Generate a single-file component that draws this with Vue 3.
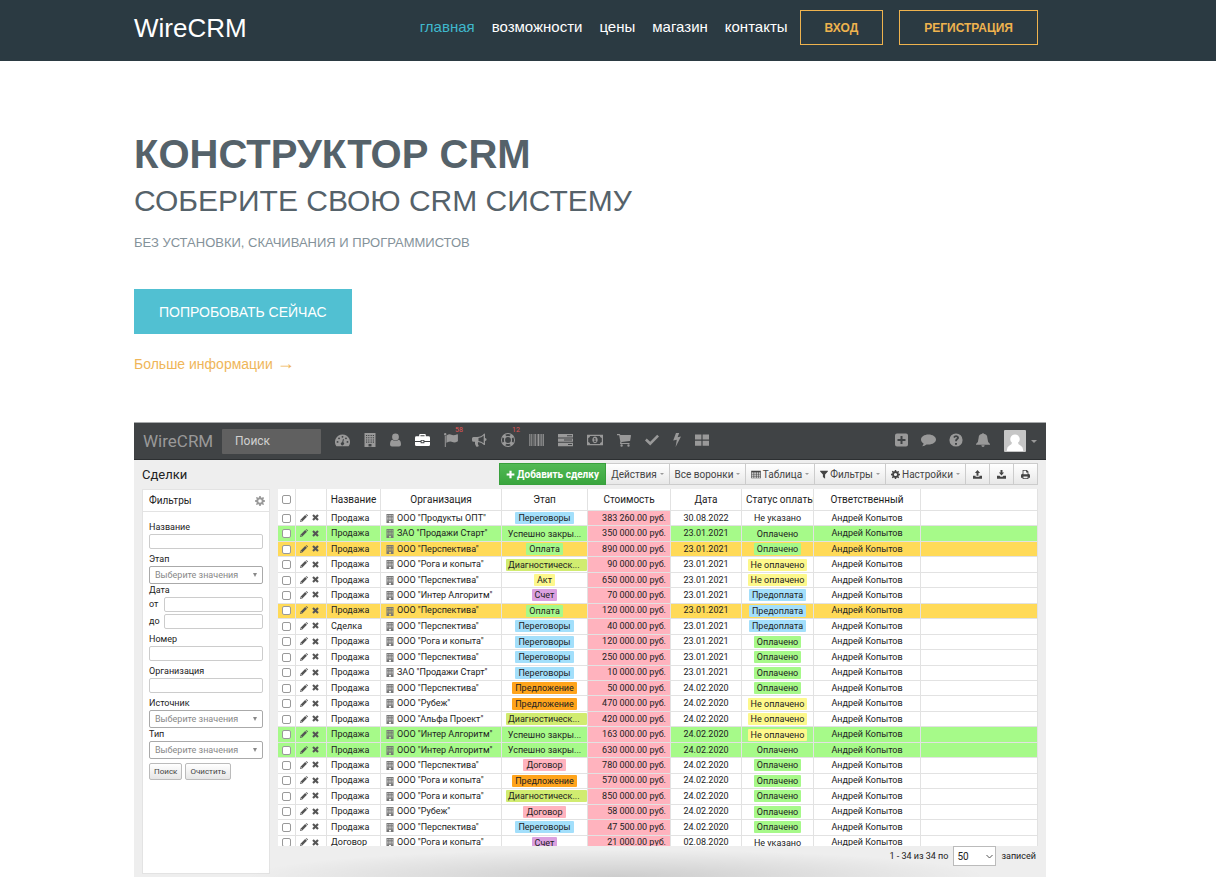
<script setup>
const dot = (x, y, r) => `M${x - r} ${y}a${r} ${r} 0 1 0 ${2 * r} 0a${r} ${r} 0 1 0 ${-2 * r} 0z`
const box = (x, y, w, h) => `M${x} ${y}h${w}v${h}h${-w}z`
const windows = [2, 4.2, 6.6, 8.8].flatMap(x => [2, 4.2, 6.4, 8.6].map(y => box(x, y, 1.2, 1.1))).join('')

// name: [box width, box height, path, drawn width when it differs]
const icons = {
  gauge: [16, 14, 'M8 1a8 8 0 0 0-6.7 12.3q.2.4.6.4h12.2q.4 0 .6-.4A8 8 0 0 0 8 1z' + dot(2.7, 9, 1) + dot(4.3, 5.2, 1) + dot(8, 3.6, 1) + dot(11.7, 5.2, 1) + dot(13.3, 9, 1) + 'M8.5 6l1 .3-.7 3.2a1.7 1.7 0 1 1-1.2-.2z', 15],
  building: [12, 14, 'M.5 0h11v14H.5z' + windows + box(4.5, 11, 3, 2.4)],
  user: [11, 14, dot(5.5, 4, 3.4) + 'M2.4 6.7Q5.5 9.4 8.6 6.7 11 7.500 11 11.500q0 2-2 2H2q-2 0-2-2Q0 7.500 2.400 6.700z'],
  briefcase: [16, 14, 'M4.500 3V1.500Q4.500.5 5.500.5h5q1 0 1 1V3h3Q16 3 16 4.500V8h-6V7H6v1H0V4.500Q0 3 1.500 3zM5.800 3h4.400V1.800H5.800zM0 9h6v1.400h4V9h6v3q0 1.500-1.500 1.500h-13Q0 13.500 0 12zM7 7.800h2v1.500H7z', 15],
  flag: [14, 14, dot(1.2, 1.3, 1.2) + 'M.8 3h1v11H.8zM2.400 2.600q3-2 5-.8t6-.6q.5 0 .5.500v6.500q-3.500 2-5.500.800t-6 .800z'],
  bullhorn: [15, 14, 'M13 5V1.200Q13 .3 12 .7 9 4 5 4H1.500Q0 4 0 5.500v1.800Q0 8.800 1.500 8.800H3q-.6 2.500 1.200 4.600 1.500.6 2.600-.4-1.700-1.600-.6-4Q9.800 9.400 12 12q1 .4 1-.6V8q1.600-.2 1.600-1.500T13 5zM11.700 2.500v7.800Q9.500 8.200 6.500 7.900V5Q9.500 4.600 11.700 2.500z'],
  ring: [14, 14, dot(7, 7, 7) + dot(7, 7, 2.9) + 'M4.200 1.700A6 6 0 0 1 9.800 1.700L8.500 3.200A4.200 4.200 0 0 0 5.500 3.200zM4.200 12.300A6 6 0 0 0 9.800 12.300L8.500 10.800A4.200 4.200 0 0 1 5.500 10.800zM1.700 4.200A6 6 0 0 0 1.700 9.800L3.200 8.500A4.200 4.200 0 0 1 3.200 5.500zM12.300 4.200A6 6 0 0 1 12.300 9.800L10.800 8.500A4.200 4.200 0 0 0 10.800 5.500z'],
  barcode: [15, 14, [[0, .7], [1.200, .4], [2.300, .9], [3.900, .5], [5.200, .5], [6.200, 1], [8, .5], [9, 1.200], [10.800, .5], [11.800, .9], [13.200, .4], [14.100, .8]].map(([x, w]) => box(x, 1, w, 12)).join('')],
  server: [15, 14, box(0, 1, 15, 3.4) + box(9, 2.2, 5, 1) + box(0, 5.400, 15, 3.400) + box(6, 6.600, 8, 1) + box(0, 9.800, 15, 3.400) + box(10, 11, 4, 1)],
  money: [16, 14, box(0, 1.8, 16, 10.4) + 'M3.200 3h9.600q.2 1.600 2 2v4q-1.800.3-2 2H3.200Q3 9.300 1.200 9V5Q3 4.600 3.200 3z' + 'M8 3.500a2.700 3.400 0 1 0 .01 0z' + 'M7.500 5h1v3.200h.7v.9H6.800v-.9h.7V6.300h-.7v-.8z'],
  cart: [14, 14, 'M0 1h2.500q.7 0 .8 1H13.500q.5 0 .5.600l-.8 5q-.1.500-.6.500L4.500 9l-.1.900h8.100V11H3.500q-.7 0-.5-.9L3.400 9 2.200 2.200H0z' + dot(4.600, 12.500, 1.200) + dot(11.500, 12.500, 1.200)],
  check: [14, 14, 'M1.700 5.500L0 7.400l5.200 5L14 3.600 12.200 1.700 5.200 8.700z'],
  bolt: [8, 14, 'M3 0h3.200L4.600 4.300 8 3.500 2.600 14 3.800 6.700.2 7.600z'],
  grid: [14, 14, box(0, 1.500, 6.400, 5) + box(7.600, 1.500, 6.400, 5) + box(0, 7.700, 6.400, 5) + box(7.600, 7.700, 6.400, 5)],
  plusbox: [13, 14, 'M2 .6h9q2 0 2 2v9q0 2-2 2H2q-2 0-2-2v-9q0-2 2-2zM5.500 3.100v3H2.500v2h3v3h2v-3h3v-2h-3v-3z'],
  comment: [15, 14, 'M7.500 1.500C3.300 1.500 0 3.700 0 6.600c0 1.600 1 3 2.600 4q-.2 1.400-1.500 2.700 2.600-.2 4.400-1.800l2 .1c4.200 0 7.500-2.200 7.500-5s-3.300-5.100-7.500-5.100z'],
  question: [14, 14, dot(7, 7, 6.6) + 'M6 10h2v1.800H6zM4.200 4.100Q5.300 2.200 7.200 2.300q2.700.2 2.800 2.500 0 1.200-1.300 2-.8.500-.8 1.500H6.100q0-2 1.200-2.700.7-.5.7-.9 0-.7-.9-.7-.7 0-1.500 1.100z'],
  bell: [14, 14, 'M6.300.8q0-.8.700-.8t.7.800q3.600.6 3.700 4.200 0 4 2.600 6v.7H0V11q2.600-2 2.600-6Q2.700 1.400 6.300.8zM5.300 12.300h3.400q-.2 1.700-1.700 1.700t-1.700-1.700z'],
  gear: [14, 14, 'M6 0h2l.4 2 1.300.5L11.400 1.400 12.700 2.700 11.500 4.400 12 5.700 14 6v2l-2 .4-.5 1.300 1.200 1.700-1.300 1.300-1.700-1.200L8.400 12 8 14H6l-.4-2-1.300-.5-1.700 1.200-1.300-1.300L2.500 9.700 2 8.400 0 8V6l2-.4.500-1.300L1.300 2.600 2.600 1.300 4.300 2.500 5.600 2z' + dot(7, 7, 2.500)],
  plus: [14, 14, 'M5.300 1h3.400v4.300H13v3.400H8.700V13H5.300V8.700H1V5.300h4.300z'],
  table: [15, 14, box(0, 1, 15, 12) + [1, 4.700, 8.400, 12].flatMap(x => [4, 7, 10].map(y => box(x, y, x > 10 ? 2 : 2.700, 2))).join('')],
  filter: [12, 14, 'M0 1h12v1.500L7.700 7v6.500L4.300 11V7L0 2.500z'],
  upload: [14, 14, 'M7 0l4 4.500H8.500V9h-3V4.500H3zM0 9h4v1.500h6V9h4v4.500H0z'],
  download: [14, 14, 'M5.500 0h3v4H11L7 8.500 3 4h2.500zM0 9h4l1.500 1.500h3L10 9h4v4.500H0z'],
  print: [14, 14, 'M2.500 6V0H9l2.500 2.500V6q2.500 0 2.500 2.500V12h-2.500v2h-9v-2H0V8.500Q0 6 2.500 6zM3.800 6.500h6.400V4H8V1.300H3.800zM3.800 10v2.700h6.400V10z'],
  pencil: [14, 14, 'M0 14l.8-4L9 1.800 12.200 5 4 13.200zM9.900.9q1-1.200 2.200-.2l1.200 1.200q1 1.200-.2 2.200zM1.700 10.600l-.5 2.200 2.200-.5z'],
  cross: [14, 14, 'M3.500.5L7 4 10.500.5l3 3L10 7l3.500 3.500-3 3L7 10l-3.500 3.500-3-3L4 7 .5 3.500z'],
}

const appMenu = [
  ['gauge', 'Панель'], ['building', 'Организации'], ['user', 'Контакты'], ['briefcase', 'Сделки'],
  ['flag', 'Задачи', '58'], ['bullhorn', 'Рассылки'], ['ring', 'Поддержка', '12'], ['barcode', 'Товары'],
  ['server', 'Склад'], ['money', 'Платежи'], ['cart', 'Заказы'], ['check', 'Дела'], ['bolt', 'События'], ['grid', 'Модули'],
]
const tools = [['plusbox', 'Создать'], ['comment', 'Сообщения'], ['question', 'Помощь'], ['bell', 'Уведомления']]

const P = 'ООО "Перспектива"', R = 'ООО "Рога и копыта"', I = 'ООО "Интер Алгоритм"', Z = 'ЗАО "Продажи Старт"', B = 'ООО "Рубеж"'
const tones = {
  'Переговоры': 'blue', 'Оплата': 'green', 'Диагностическ...': 'lime', 'Акт': 'yellow', 'Счет': 'purple',
  'Предложение': 'orange', 'Договор': 'pink', 'Успешно закры...': 'none',
  'Не указано': 'none', 'Оплачено': 'green', 'Не оплачено': 'yellow', 'Предоплата': 'blue',
}
const T = 'Переговоры', O = 'Предложение', D = 'Диагностическ...', U = 'Успешно закры...'
const d1 = '23.01.2021', d2 = '24.02.2020', paid = 'Оплачено', unpaid = 'Не оплачено', pre = 'Предоплата'
const rows = [
  ['Продажа', 'ООО "Продукты ОПТ"', T, '383 260.00', '30.08.2022', 'Не указано'],
  ['Продажа', Z, U, '350 000.00', d1, paid, 'won'],
  ['Продажа', P, 'Оплата', '890 000.00', d1, paid, 'hot'],
  ['Продажа', R, D, '90 000.00', d1, unpaid],
  ['Продажа', P, 'Акт', '650 000.00', d1, unpaid],
  ['Продажа', I, 'Счет', '70 000.00', d1, pre],
  ['Продажа', P, 'Оплата', '120 000.00', d1, pre, 'hot'],
  ['Сделка', P, T, '40 000.00', d1, pre],
  ['Продажа', R, T, '120 000.00', d1, paid],
  ['Продажа', P, T, '250 000.00', d1, paid],
  ['Продажа', Z, T, '10 000.00', d1, paid],
  ['Продажа', P, O, '50 000.00', d2, paid],
  ['Продажа', B, O, '470 000.00', d2, unpaid],
  ['Продажа', 'ООО "Альфа Проект"', D, '420 000.00', d2, unpaid],
  ['Продажа', I, U, '163 000.00', d2, unpaid, 'won'],
  ['Продажа', I, U, '630 000.00', d2, paid, 'won'],
  ['Продажа', P, 'Договор', '780 000.00', d2, paid],
  ['Продажа', R, O, '570 000.00', d2, paid],
  ['Продажа', R, D, '850 000.00', d2, paid],
  ['Продажа', B, 'Договор', '58 000.00', d2, paid],
  ['Продажа', P, T, '47 500.00', d2, paid],
  ['Договор', R, 'Счет', '21 000.00', '02.08.2020', 'Не указано'],
]
</script>

<template>
  <header class="top">
    <div class="wrap top-row">
      <a class="brand" href="#">WireCRM</a>
      <nav class="nav">
        <a class="current" href="#">главная</a>
        <a href="#">возможности</a>
        <a href="#">цены</a>
        <a href="#">магазин</a>
        <a href="#">контакты</a>
      </nav>
      <div class="auth">
        <button>ВХОД</button>
        <button>РЕГИСТРАЦИЯ</button>
      </div>
    </div>
  </header>

  <main class="wrap">
    <section class="hero">
      <h1>КОНСТРУКТОР CRM</h1>
      <h2>СОБЕРИТЕ СВОЮ CRM СИСТЕМУ</h2>
      <p>БЕЗ УСТАНОВКИ, СКАЧИВАНИЯ И ПРОГРАММИСТОВ</p>
      <button class="try">ПОПРОБОВАТЬ СЕЙЧАС</button>
      <a class="more" href="#">Больше информации <span class="arrow">→</span></a>
    </section>

    <section class="app">
      <div class="bar">
        <span class="app-brand">WireCRM</span>
        <input class="search" type="text" placeholder="Поиск" aria-label="Поиск">
        <div class="menu">
          <a v-for="[name, label, count] in appMenu" :key="name" href="#" :aria-label="label" :class="{ on: name === 'briefcase' }">
            <svg :width="icons[name][3] ?? icons[name][0]" :height="icons[name][1]" :viewBox="`0 0 ${icons[name][0]} ${icons[name][1]}`"><path :d="icons[name][2]" /></svg>
            <span v-if="count" class="count">{{ count }}</span>
          </a>
        </div>
        <div class="tools">
          <a v-for="[name, label] in tools" :key="name" href="#" :aria-label="label">
            <svg :width="icons[name][0]" :height="icons[name][1]" :viewBox="`0 0 ${icons[name][0]} ${icons[name][1]}`"><path :d="icons[name][2]" /></svg>
          </a>
        </div>
        <button class="avatar" aria-label="Профиль">
          <svg width="22" height="22" viewBox="0 0 22 22"><rect width="22" height="22" rx="1" fill="#c6c6c6" /><path fill="#fff" d="M11 4.500a4.700 4.700 0 0 1 3 8.300q0 1.600 2.500 2.600 2.500 1.200 2.700 4.800v.8H2.800v-.8Q3 16.600 5.500 15.400 8 14.400 8 12.800a4.700 4.700 0 0 1 3-8.300z" /></svg>
          <i class="caret"></i>
        </button>
      </div>

      <div class="title-row">
        <h3>Сделки</h3>
        <div class="actions">
          <button class="add"><svg width="9" height="9" viewBox="0 0 14 14"><path :d="icons.plus[2]" /></svg>Добавить сделку</button>
          <button class="w63">Действия<i class="caret"></i></button>
          <button class="w76">Все воронки<i class="caret"></i></button>
          <button class="w69"><svg width="10" height="9" viewBox="0 0 15 14"><path :d="icons.table[2]" /></svg>Таблица<i class="caret"></i></button>
          <button class="w71"><svg width="8" height="9" viewBox="0 0 12 14"><path :d="icons.filter[2]" /></svg>Фильтры<i class="caret"></i></button>
          <button class="w80"><svg width="9" height="9" viewBox="0 0 14 14"><path :d="icons.gear[2]" /></svg>Настройки<i class="caret"></i></button>
          <button v-for="[n, l] in [['upload', 'Экспорт'], ['download', 'Импорт'], ['print', 'Печать']]" :key="n" class="w24" :aria-label="l">
            <svg width="9" height="9" viewBox="0 0 14 14"><path :d="icons[n][2]" /></svg>
          </button>
        </div>
      </div>

      <div class="work">
        <form class="filters" @submit.prevent>
          <div class="filters-head">Фильтры<svg width="10" height="10" viewBox="0 0 14 14"><path :d="icons.gear[2]" /></svg></div>
          <div class="fields">
            <div class="field"><label for="f-name">Название</label><input id="f-name" type="text"></div>
            <div class="field tight"><label for="f-stage">Этап</label><span class="pick"><select id="f-stage"><option>Выберите значения</option></select></span></div>
            <div class="field">
              <span class="cap">Дата</span>
              <div class="dates">
                <label for="f-from">от</label><input id="f-from" type="text">
                <label for="f-to">до</label><input id="f-to" type="text">
              </div>
            </div>
            <div class="field"><label for="f-num">Номер</label><input id="f-num" type="text"></div>
            <div class="field"><label for="f-org">Организация</label><input id="f-org" type="text"></div>
            <div class="field tight"><label for="f-src">Источник</label><span class="pick"><select id="f-src"><option>Выберите значения</option></select></span></div>
            <div class="field"><label for="f-type">Тип</label><span class="pick"><select id="f-type"><option>Выберите значения</option></select></span></div>
            <div class="buttons"><button>Поиск</button><button>Очистить</button></div>
          </div>
        </form>

        <div class="data">
          <div class="clip">
            <table>
              <colgroup><col class="c18"><col class="c31"><col class="c54"><col class="c121"><col class="c86"><col class="c83"><col class="c71"><col class="c72"><col class="c107"><col></colgroup>
              <thead>
                <tr>
                  <th><input type="checkbox" aria-label="Выбрать все"></th><th></th><th>Название</th><th>Организация</th><th>Этап</th><th>Стоимость</th><th>Дата</th><th class="status">Статус оплаты</th><th>Ответственный</th><th></th>
                </tr>
              </thead>
              <tbody>
                <tr v-for="(r, i) in rows" :key="i" :class="r[6]">
                  <td class="mid"><input type="checkbox" :aria-label="`Выбрать строку ${i + 1}`"></td>
                  <td class="edit">
                    <svg width="8" height="8" viewBox="0 0 14 14"><path :d="icons.pencil[2]" /></svg>
                    <svg width="7" height="7" viewBox="0 0 14 14"><path :d="icons.cross[2]" /></svg>
                  </td>
                  <td class="name">{{ r[0] }}</td>
                  <td class="org"><svg width="8" height="9" viewBox="0 0 12 14"><path :d="icons.building[2]" /></svg>{{ r[1] }}</td>
                  <td class="mid"><span class="tag" :class="tones[r[2]]">{{ r[2] }}</span></td>
                  <td class="sum">{{ r[3] }} руб.</td>
                  <td class="mid">{{ r[4] }}</td>
                  <td class="mid"><span class="tag" :class="r[6] === 'won' && r[5] === paid ? 'none' : tones[r[5]]">{{ r[5] }}</span></td>
                  <td class="mid">Андрей Копытов</td>
                  <td></td>
                </tr>
              </tbody>
            </table>
          </div>
          <div class="pager">
            <label for="per-page">1 - 34 из 34 по</label>
            <span class="size"><select id="per-page"><option>50</option></select><svg width="7" height="5" viewBox="0 0 7 5"><path d="M.5 1L3.500 4 6.500 1" /></svg></span>
            <span>записей</span>
          </div>
        </div>
      </div>
    </section>
  </main>
</template>

<style>
body { background: #fff; }
</style>

<style scoped>
* { box-sizing: border-box; }
h1, h2, h3, p { margin: 0; font-weight: 400; }
a { text-decoration: none; color: inherit; }
button, input, select { font: inherit; color: inherit; margin: 0; padding: 0; border: 0; border-radius: 0; background: none; }
button { cursor: pointer; white-space: nowrap; }
svg { display: block; flex: none; fill: currentColor; fill-rule: evenodd; }

.wrap { max-width: 912px; margin-left: 134px; font-family: "Liberation Sans", Arial, sans-serif; }
.top { background: #2b3a42; }
.top-row { display: flex; height: 61px; padding: 10px 8px 0 0; align-items: flex-start; color: #fff; }
.brand { font-size: 26px; line-height: 36px; }
.nav { display: flex; gap: 17px; margin-left: auto; font-size: 15px; line-height: 33px; }
.nav .current { color: #3fb8cd; }
.auth { display: flex; gap: 16px; margin-left: 12px; }
.auth button { height: 35px; padding: 0 24px; border: 1px solid #efb34e; color: #efb34e; font-size: 12px; font-weight: 700; }

.hero { display: flex; flex-direction: column; align-items: flex-start; padding: 68px 0 48px; color: #55626a; }
h1 { font-size: 40px; line-height: 50px; font-weight: 700; }
h2 { font-size: 30px; line-height: 44px; }
.hero p { margin-top: 10px; font-size: 13px; line-height: 20px; color: #84929a; }
.try { height: 45px; margin-top: 36px; padding: 0 25px; background: #51c0d2; color: #fff; font-size: 14px; }
.more { margin-top: 20px; font-size: 14px; line-height: 20px; color: #efb659; }
.arrow { font-size: 18px; line-height: 1; }

.app { position: relative; border-top: 1px solid #a8aaab; background: #eee; font-family: Roboto, sans-serif; font-size: 9px; color: #222; }
.app::after { content: ""; position: absolute; left: 12%; right: 6%; bottom: 0; height: 28px; background: radial-gradient(ellipse at 50% 100%, rgba(0, 0, 0, .14), rgba(0, 0, 0, 0) 70%); pointer-events: none; }
.bar { display: flex; align-items: center; height: 37px; padding: 0 9px; background: #404345; border-bottom: 1px solid #2c2f31; color: #999; }
.app-brand { width: 79px; font-size: 17px; }
.search { width: 99px; height: 25px; padding: 0 13px; border-radius: 1px; background: #606060; font-size: 12px; }
.search::placeholder { color: #d0d0d0; opacity: 1; }
.menu { display: flex; gap: 14px; margin-left: 14px; padding-bottom: 2px; }
.menu a { position: relative; }
.menu .on { color: #fff; }
.count { position: absolute; left: 11px; top: -7px; color: #e05555; font-size: 7px; line-height: 10px; }
.menu .count { top: -8px; }
.tools { display: flex; gap: 13px; margin-left: auto; padding-bottom: 2px; }
.avatar { display: flex; align-items: center; gap: 5px; margin-left: 14px; }
.caret { display: inline-block; flex: none; border: 2px solid transparent; border-top-color: #999; border-bottom: 0; margin-left: 3px; }
.avatar .caret { border-width: 3px 3px 0; margin: 0; }

.title-row { display: flex; justify-content: space-between; padding: 3px 8px 2px; }
h3 { font-size: 13px; line-height: 24px; }
.actions { display: flex; height: 22px; }
.actions button { display: flex; align-items: center; justify-content: center; border: 1px solid #ccc; border-left-width: 0; background: linear-gradient(#fff, #e8e8e8); font-size: 10px; color: #444; }
.actions svg { margin-right: 2px; }
.actions .w24 svg { margin: 0; }
.actions .add { width: 107px; border: 1px solid #39a03d; background: linear-gradient(#52b955, #3aa63e); color: #fff; font-weight: 700; }
.w63 { width: 64px; } .w76 { width: 76px; } .w69 { width: 69px; } .w71 { width: 71px; } .w80 { width: 80px; } .w24 { width: 24px; }

.work { display: flex; gap: 8px; padding: 0 8px 3px; }
.filters { width: 128px; flex: none; background: #fff; border: 1px solid #e3e3e3; }
.filters-head { display: flex; justify-content: space-between; align-items: center; height: 22px; padding: 0 4px 0 6px; border-bottom: 1px solid #e3e3e3; font-size: 10px; }
.filters-head svg { color: #999; }
.fields { padding: 9px 6px; }
.field { display: flex; flex-direction: column; margin-bottom: 4px; }
.field label, .cap { line-height: 13px; }
.field input { height: 15px; border: 1px solid #ccc; border-radius: 2px; background: #fff; }
.dates { display: grid; grid-template-columns: 15px 1fr; gap: 2px 0; align-items: center; }
.dates input { width: 100%; }
.tight { margin-bottom: 0; }
.pick { position: relative; display: block; }
.pick select { width: 100%; height: 18px; padding: 0 5px; appearance: none; border: 1px solid #aaa; border-radius: 2px; background: #fff; color: #888; }
.pick::after { content: ""; position: absolute; right: 6px; top: 7px; border: 2px solid transparent; border-top: 4px solid #888; border-bottom: 0; }
.buttons { display: flex; gap: 3px; }
.buttons button { height: 17px; padding: 0 4px; border: 1px solid #bbb; border-radius: 2px; background: linear-gradient(#fff, #e6e6e6); font-size: 8px; color: #444; }

.data { flex: 1; min-width: 0; padding-bottom: 8px; }
.clip { height: 357px; overflow: hidden; }
table { width: 100%; height: 362px; table-layout: fixed; border-collapse: separate; border-spacing: 0; background: #fff; }
th, td { padding: 0; border-right: 1px solid #e2e2e2; border-bottom: 1px solid #e2e2e2; overflow: hidden; white-space: nowrap; line-height: 11px; vertical-align: middle; }
thead tr { height: 22px; }
th { font-weight: 400; font-size: 10px; }
.status { padding-left: 4px; text-align: left; }
tr.won { background: #a6fa89; }
tr.hot { background: #ffda58; }
.mid { text-align: center; }
.name { padding-left: 4px; }
td svg { display: inline-block; vertical-align: middle; color: #555; }
.edit { padding-left: 4px; font-size: 0; }
.edit svg + svg { margin-left: 4px; }
.org { padding-left: 5px; }
.org svg { margin-right: 3px; color: #777; }
.sum { padding-right: 4px; text-align: right; background: #ffb3be; }
.tag { display: inline-block; padding: 0 3px; border-radius: 1px; line-height: 12px; vertical-align: middle; }
.blue { background: #a3dffb; }
.green { background: #a6f989; }
.lime { display: block; margin-left: 4px; padding: 0 2px; text-align: left; background: #d1ec70; }
.yellow { background: #fdf88c; }
.purple { background: #dba0e0; }
.orange { background: #ffa41c; }
.pink { background: #ffb3be; }
input[type="checkbox"] { display: block; width: 9px; height: 9px; margin: 0 auto; appearance: none; border: 1px solid #999; border-radius: 2px; background: #fff; }
.c18 { width: 18px; } .c31 { width: 31px; } .c54 { width: 54px; } .c121 { width: 121px; } .c86 { width: 86px; } .c83 { width: 83px; } .c71 { width: 71px; } .c72 { width: 72px; } .c107 { width: 107px; }
.pager { display: flex; justify-content: flex-end; align-items: center; gap: 5px; height: 20px; padding-right: 2px; }
.size { position: relative; }
.size select { width: 43px; height: 20px; padding: 0 3px; appearance: none; border: 1px solid #bbb; background: #fff; font-size: 10px; }
.size svg { position: absolute; right: 3px; top: 8px; fill: none; stroke: #555; }
</style>
